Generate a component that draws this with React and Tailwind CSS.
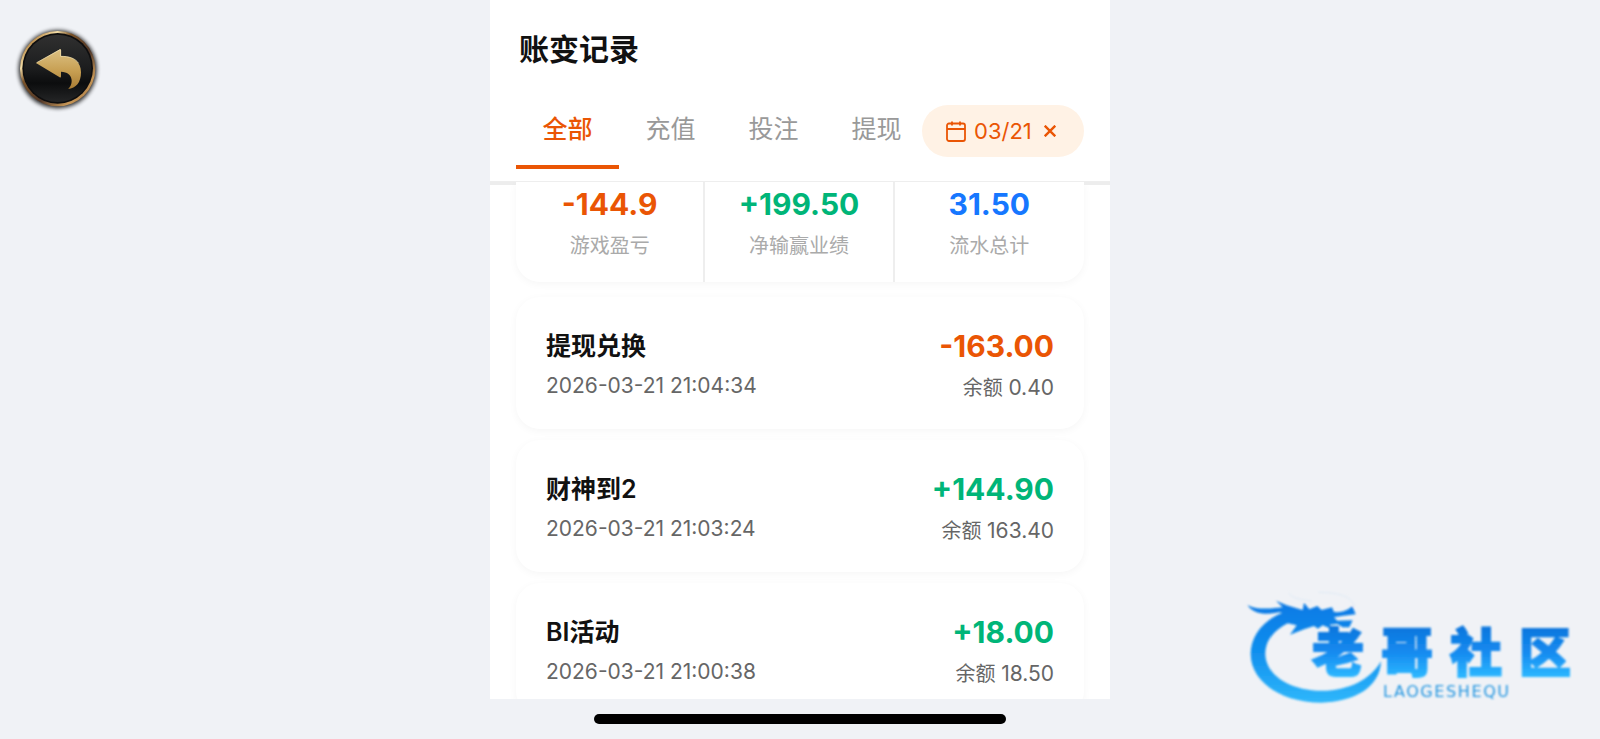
import React from "react";

const tabs = ["全部", "充值", "投注", "提现"];

const totals = [
  { value: "-144.9", label: "游戏盈亏", color: "text-[#ea5504]" },
  { value: "+199.50", label: "净输赢业绩", color: "text-[#00b578]" },
  { value: "31.50", label: "流水总计", color: "text-[#1677ff]" },
];

const records = [
  { title: "提现兑换", time: "2026-03-21 21:04:34", amount: "-163.00", balance: "0.40" },
  { title: "财神到2", time: "2026-03-21 21:03:24", amount: "+144.90", balance: "163.40" },
  { title: "BI活动", time: "2026-03-21 21:00:38", amount: "+18.00", balance: "18.50" },
];

function BackIcon() {
  return (
    <svg viewBox="0 0 360 360" className="size-[120px]" aria-hidden="true">
      <defs>
        <linearGradient id="ring" x1="0" y1="0" x2="1" y2="1">
          <stop offset="0" stopColor="#8a5a28" />
          <stop offset="0.14" stopColor="#b98a48" />
          <stop offset="0.25" stopColor="#f5dfa8" />
          <stop offset="0.36" stopColor="#7a5228" />
          <stop offset="0.6" stopColor="#513728" />
          <stop offset="0.8" stopColor="#c89858" />
          <stop offset="1" stopColor="#8a5a30" />
        </linearGradient>
        <linearGradient id="disc" x1="0" y1="0" x2="0" y2="1">
          <stop offset="0" stopColor="#303030" />
          <stop offset="0.5" stopColor="#1c1d1e" />
          <stop offset="0.72" stopColor="#0c0d0e" />
          <stop offset="1" stopColor="#242526" />
        </linearGradient>
        <linearGradient id="gold" x1="0" y1="0" x2="0" y2="1">
          <stop offset="0" stopColor="#dcc184" />
          <stop offset="0.55" stopColor="#c79f52" />
          <stop offset="1" stopColor="#a87c34" />
        </linearGradient>
        <filter id="glow" x="-20%" y="-20%" width="140%" height="140%">
          <feGaussianBlur stdDeviation="6" />
        </filter>
      </defs>
      <circle cx="173" cy="178" r="117" fill="#000" opacity="0.85" filter="url(#glow)" />
      <circle cx="173" cy="176" r="113" fill="url(#ring)" />
      <circle cx="173" cy="175" r="106" fill="#0e0e0f" />
      <circle cx="173" cy="175" r="101" fill="url(#disc)" />
      <path
        d="M108 159 L180 118 Q183 116 183 121 L183 138 C220 138 243 155 243 187 C243 218 228 235 204 237 C221 224 222 186 183 185 L183 199 Q183 204 179 202 Z"
        fill="url(#gold)"
      />
      <path d="M110 158 L180 119 Q182 118 182 122 L182 139 C208 139 226 145 236 160" fill="none" stroke="#f5e6b8" strokeWidth="2" />
    </svg>
  );
}

function CalendarIcon() {
  return (
    <svg viewBox="0 0 20 21" className="h-[21px] w-5 shrink-0" fill="none" stroke="currentColor" strokeWidth="1.8" strokeLinejoin="round" aria-hidden="true">
      <rect x="1" y="2.5" width="18" height="17.5" rx="2" />
      <path d="M1 8h18M6 0.5v4M14 0.5v4" />
    </svg>
  );
}

function CommunityLogo() {
  return (
    <svg viewBox="0 0 370 140" className="h-[140px] w-[370px]" role="img" aria-label="老哥社区 LAOGESHEQU">
      <defs>
        <linearGradient id="ringBlue" gradientUnits="userSpaceOnUse" x1="0" y1="60" x2="0" y2="370">
          <stop offset="0" stopColor="#0879e4" />
          <stop offset="0.5" stopColor="#118fee" />
          <stop offset="1" stopColor="#30b8fb" />
        </linearGradient>
        <linearGradient id="textBlue" gradientUnits="userSpaceOnUse" x1="0" y1="50" x2="0" y2="96">
          <stop offset="0" stopColor="#0b78df" />
          <stop offset="0.5" stopColor="#168bf0" />
          <stop offset="1" stopColor="#2bb6ff" />
        </linearGradient>
        <filter id="soft" x="-5%" y="-5%" width="110%" height="110%">
          <feGaussianBlur stdDeviation="0.8" />
        </filter>
      </defs>
      <g filter="url(#soft)">
        <g transform="scale(0.33333)" fill="url(#ringBlue)">
          <path d="M176 92 C104 112 62 165 62 222 C62 304 152 368 275 368 C370 366 450 324 453 244 C428 288 375 327 290 332 C185 337 105 286 106 220 C107 170 148 137 202 116 Z" />
          <path d="M52 74 C72 88 112 88 158 82 L138 62 L170 76 L218 90 L222 68 L238 88 L262 78 L275 90 L306 82 L312 96 C336 98 352 92 367 79 L377 103 L340 107 L312 112 L322 122 L368 121 L358 142 L338 142 L322 132 L300 134 L306 148 L278 136 L264 146 L252 138 L222 148 L180 164 L200 136 L166 128 L186 106 L148 97 C110 105 70 104 52 74 Z" />
          <path d="M176 40 C196 62 224 57 245 64 M265 37 C325 38 362 46 374 80" fill="none" stroke="#dde9f4" strokeWidth="3" />
        </g>
        <text
          x="82 151 220 289"
          y="92"
          fill="url(#textBlue)"
          stroke="url(#textBlue)"
          strokeWidth="2"
          className="font-['Noto_Sans_CJK_SC',sans-serif] text-[52px] font-black"
        >
          老哥社区
        </text>
        <text x="153" y="117" fill="#2295e0" className="font-['DejaVu_Sans',sans-serif] text-[16px] tracking-widest">
          LAOGESHEQU
        </text>
      </g>
    </svg>
  );
}

function RecordCard({ title, time, amount, balance }) {
  const color = amount.startsWith("-") ? "text-[#ea5504]" : "text-[#00b578]";
  return (
    <li className="flex h-[132px] shrink-0 justify-between rounded-3xl bg-white px-[30px] pt-[31px] shadow-[0_2px_8px_rgba(0,0,0,0.04)]">
      <div className="flex flex-col gap-1">
        <h2 className="text-[25px] leading-9 font-semibold text-[#111]">{title}</h2>
        <time className="text-[21px] leading-9 text-[#666]">{time}</time>
      </div>
      <div className="flex flex-col gap-1 text-right">
        <strong className={`text-[30px] leading-9 font-bold ${color}`}>{amount}</strong>
        <span className="text-[20px] leading-10 text-[#666]">
          余额 <span className="text-[21px]">{balance}</span>
        </span>
      </div>
    </li>
  );
}

export default function App() {
  return (
    <div className="relative flex h-screen flex-col items-center overflow-hidden bg-[#f0f2f6] font-[Inter,'Noto_Sans_CJK_SC',sans-serif]">
      <button type="button" aria-label="返回" className="absolute top-[10px] left-0">
        <BackIcon />
      </button>

      <main className="flex min-h-0 w-full max-w-[620px] flex-1 flex-col overflow-hidden bg-white">
        <header className="shrink-0 border-b border-[#eee] px-[26px] pt-[27px]">
          <h1 className="pl-[3px] text-[30px] leading-[44px] font-bold text-[#111]">账变记录</h1>
          <div className="flex h-[110px] items-start pt-7">
            <nav className="flex min-w-0 flex-1 overflow-hidden">
              {tabs.map((tab, i) => (
                <button
                  key={tab}
                  type="button"
                  className={`h-[70px] w-[103px] shrink-0 border-b-4 pb-[6px] text-[25px] leading-9 ${
                    i === 0 ? "border-[#ea5504] font-medium text-[#ea5504]" : "border-transparent text-[#999]"
                  }`}
                >
                  {tab}
                </button>
              ))}
            </nav>
            <button
              type="button"
              className="mt-[6px] flex h-[52px] w-[162px] shrink-0 items-center rounded-full bg-[#fff2e5] pl-6 text-[22px] text-[#ea5504]"
            >
              <CalendarIcon />
              <span className="ml-2">03/21</span>
              <svg viewBox="0 0 12 12" className="ml-3 size-3" fill="none" stroke="currentColor" strokeWidth="2.4" aria-hidden="true">
                <path d="M0.7 0.7l10.6 10.6M11.3 0.7L0.7 11.3" />
              </svg>
            </button>
          </div>
        </header>

        <div className="flex min-h-0 flex-1 flex-col overflow-hidden">
          <section className="flex shrink-0">
            <div className="h-[3px] w-[26px] bg-[#ededed]" />
            <dl className="grid h-[100px] flex-1 grid-cols-3 divide-x-2 divide-[#eee] rounded-b-3xl bg-white shadow-[0_2px_8px_rgba(0,0,0,0.04)]">
              {totals.map((t) => (
                <div key={t.label} className="flex flex-col-reverse justify-end gap-1 pt-1 text-center">
                  <dt className="text-[20px] leading-10 text-[#aaa]">{t.label}</dt>
                  <dd className={`text-[30px] leading-9 font-bold ${t.color}`}>{t.value}</dd>
                </div>
              ))}
            </dl>
            <div className="h-[3px] w-[26px] bg-[#ededed]" />
          </section>
          <ul className="flex flex-col gap-[11px] px-[26px] pt-[15px]">
            {records.map((r) => (
              <RecordCard key={r.time} {...r} />
            ))}
          </ul>
        </div>
      </main>

      <footer className="flex h-10 shrink-0 items-start pt-[15px]">
        <div className="h-[10px] w-[412px] rounded-full bg-black" />
      </footer>

      <div className="pointer-events-none absolute right-0 bottom-[19px]">
        <CommunityLogo />
      </div>
    </div>
  );
}
